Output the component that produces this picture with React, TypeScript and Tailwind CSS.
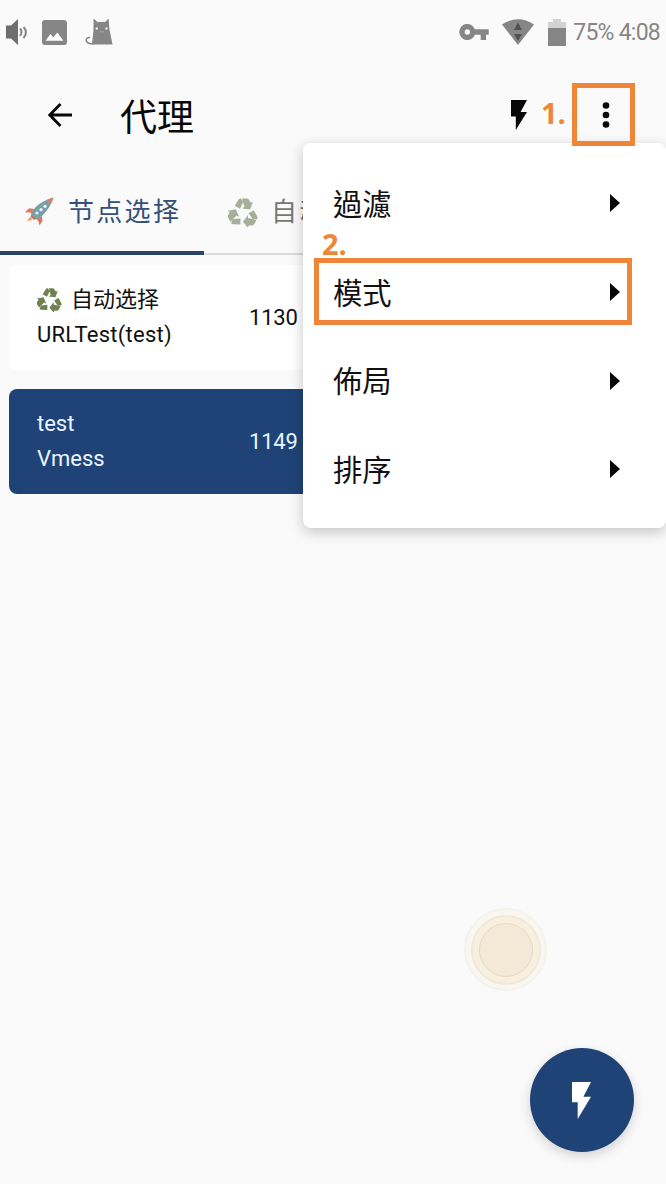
import type { ReactNode } from "react";

function Bolt({ className }: { className: string }) {
  return (
    <svg viewBox="7 2 10 20" preserveAspectRatio="none" className={className} fill="currentColor">
      <path d="M7 2v11h3v9l7-12h-4l4-8z" />
    </svg>
  );
}

const recycleArm = "M6.800 8.800 10.300 2.900Q11.400 1.300 13 1.500L15.200 5 12 11.800zM14.200 1.500h4.300q1.800 0 2.600 1.400l1.700 2.900 2.200-1.200-2.800 7.800-8.300-1 2.500-1.500z";

function Recycle({ className }: { className: string }) {
  return (
    <svg viewBox="0 0 30 30" className={className} fill="currentColor">
      <path d={recycleArm} />
      <path d={recycleArm} transform="rotate(120 15 16.500)" />
      <path d={recycleArm} transform="rotate(240 15 16.500)" />
    </svg>
  );
}

function Rocket() {
  return (
    <svg viewBox="0 0 30 30" className="h-[30px] w-[30px] shrink-0">
      <path d="M10 12 5 11.300 .8 15.500l5.200-.2L9 18z" fill="#e0785a" />
      <path d="M18 19.500 18.500 24 15.500 28.500 14.300 24 11 20.500z" fill="#e0785a" />
      <path d="M6 19.500 3 24.500 8.500 22.500z" fill="#ef9a6e" />
      <path d="M29.500.5C22 2.500 15 6 10.500 11.500 8 14.500 6.800 17.500 7 19.500L10 22.500c3 0 6-1.500 9-4.500C24 13 27.500 7 29.500.5z" fill="#7b9fa8" />
      <path d="M29.500.5c-2.500.7-4.700 1.500-6.800 2.700L27 6.500c.9-2 1.800-4 2.500-6z" fill="#dd8064" />
      <path d="M7 17.500 12 22l-2 .8-3.300-3.100z" fill="#cf6f58" />
      <circle cx="13" cy="16" r="1.600" fill="#e9f6f8" />
      <circle cx="17" cy="12.700" r="1.600" fill="#e9f6f8" />
      <circle cx="21" cy="9.300" r="1.600" fill="#e9f6f8" />
    </svg>
  );
}

function StatusBar() {
  return (
    <div className="flex h-16 items-center justify-between pl-[6px] pr-[6px] text-[#868686]">
      <div className="flex items-center">
        <svg viewBox="0 0 24 28" className="h-7 w-6" fill="none">
          <path d="M0 7.500h5L12 1v26l-7-6.500H0z" fill="#6e6e6e" />
          <path d="M14 10.500q3 3.500 0 7.500M17.500 9q5 5 0 11" stroke="#858585" strokeWidth="2" />
        </svg>
        <svg viewBox="0 0 24 24" className="ml-3 h-[25px] w-[25px]">
          <rect width="24" height="24" rx="3" fill="#868686" />
          <path d="M3.500 20 8 13.500l2.800 3 4-4.500 5.700 8z" fill="#fff" />
        </svg>
        <svg viewBox="0 0 30 28" className="ml-[18px] h-7 w-[30px]">
          <path d="M8.500.5 12.500 4h7.500l3.500-3.500 1 11 3 15H7L8.500 12z" fill="#868686" />
          <path d="M9 25.500C4 26.500 1 24.500 1.200 22c.1-2 2-3 3.800-2.200" stroke="#868686" strokeWidth="1.600" fill="none" />
          <circle cx="11.800" cy="10.500" r="1.200" fill="#eee" />
          <circle cx="21.500" cy="10.500" r="1.200" fill="#eee" />
          <path d="m15 13.500 1 .7.800-.9.900.9 1-.8" stroke="#bbb" strokeWidth=".7" fill="none" />
        </svg>
      </div>
      <div className="flex items-center">
        <svg viewBox="1 6 22 12" className="h-4 w-[30px]" fill="currentColor">
          <path d="M12.650 10A6 6 0 1 0 12.650 14H17v4h4v-4h2v-4zM7 14a2 2 0 1 1 0-4 2 2 0 0 1 0 4z" />
        </svg>
        <svg viewBox="0 0 32 26" className="ml-[13px] h-[26px] w-8">
          <path d="M0 5.500Q16-5 32 5.500L16 26z" fill="#868686" />
          <path d="m16 3.500 4 7.500h-8zM12 15h8l-4 7z" fill="#505050" />
        </svg>
        <svg viewBox="0 0 18 27" className="ml-[14px] h-[27px] w-[18px]">
          <path d="M5 0h8v3h5v6H0V3h5z" fill="#d3d3d3" />
          <path d="M0 9h18v18H0z" fill="#868686" />
        </svg>
        <span className="ml-[7px] whitespace-pre pt-0.5 text-[23px] leading-7 tracking-[-0.750px]">75% 4:08</span>
      </div>
    </div>
  );
}

function ProxyCard({ title, type, delay, selected }: { title: ReactNode; type: ReactNode; delay: string; selected?: boolean }) {
  return (
    <div
      className={
        selected
          ? "flex h-[105px] w-[316px] items-center rounded-lg bg-[#1f4377] pl-7 text-[#e9f5ff]"
          : "flex h-[105px] w-[316px] items-center rounded-lg bg-white pl-7 text-[#111]"
      }
    >
      <div className="flex w-[212px] flex-col pb-0.5 text-[22px] leading-[35px]">
        <div className="flex h-[35px] items-center">{title}</div>
        <div>{type}</div>
      </div>
      <div className="text-[22px] leading-7 tracking-[-0.200px]">{delay}</div>
    </div>
  );
}

const menuItems = ["過濾", "模式", "佈局", "排序"];

function Menu() {
  return (
    <div className="absolute left-[303px] top-[143px] h-[385px] w-[363px] rounded-lg bg-white pt-4 font-['Roboto','Noto_Sans_CJK_TC',sans-serif] shadow-[0_4px_14px_rgba(0,0,0,0.22)]">
      {menuItems.map((label) => (
        <div key={label} className="flex h-[88.700px] items-center justify-between pl-[30px] pr-[46px] text-[29.300px] leading-10 text-[#111]">
          <span className="pt-[3px]">{label}</span>
          <svg viewBox="0 0 10 18" className="h-[18px] w-[10px]">
            <path d="M0 0 10 9 0 18z" fill="#080808" />
          </svg>
        </div>
      ))}
    </div>
  );
}

export default function App() {
  return (
    <div className="relative h-[1184px] w-[666px] overflow-hidden bg-[#fafafa] font-['Roboto','Noto_Sans_CJK_SC',sans-serif]">
      <StatusBar />
      <header className="flex h-[102px] items-center pl-[48px] pr-[56px] text-[#080808]">
        <svg viewBox="0 0 24 24" className="h-6 w-6" fill="none" stroke="currentColor" strokeWidth="2.800">
          <path d="M24 12H2M12.500 1 1.700 12l10.800 11" />
        </svg>
        <h1 className="ml-12 grow pt-[7px] text-[37px] leading-[48px]">代理</h1>
        <Bolt className="h-[30px] w-4" />
        <svg viewBox="0 0 8 26" className="ml-[75px] h-[26px] w-2" fill="currentColor">
          <circle cx="4" cy="3.500" r="3.300" />
          <circle cx="4" cy="13" r="3.300" />
          <circle cx="4" cy="22.500" r="3.300" />
        </svg>
      </header>
      <nav className="flex h-[89px] border-b-2 border-[#dcdcdc] text-[26px] leading-9 tracking-[2.300px]">
        <div className="relative flex h-[89px] w-[204px] items-center border-b-4 border-[#2a4366] pl-6 pt-[7px] text-[#344f78]">
          <Rocket />
          <span className="ml-[14px] whitespace-nowrap">节点选择</span>
        </div>
        <div className="flex h-[89px] w-[99px] items-center overflow-hidden pl-6 pt-[3px] text-[#777]">
          <Recycle className="h-[30px] w-[30px] shrink-0 text-[#a8af98]" />
          <span className="ml-[13px] whitespace-nowrap">自动选择</span>
        </div>
      </nav>
      <main className="flex flex-col gap-[19px] pl-[9px] pt-[10px]">
        <ProxyCard
          title={
            <>
              <Recycle className="mr-[9px] h-[25px] w-[25px] text-[#71804f]" />
              自动选择
            </>
          }
          type={<span className="tracking-[0.250px]">URLTest(test)</span>}
          delay="1130"
        />
        <ProxyCard title="test" type="Vmess" delay="1149" selected />
      </main>

      <Menu />

      <div className="absolute left-[572px] top-[83px] h-[63px] w-[63px] border-[5px] border-[#f08437]" />
      <div className="absolute left-[314px] top-[258px] h-[67px] w-[318px] border-[5px] border-[#f08437]" />
      <span className="absolute left-[541px] top-[96px] font-['Open_Sans',sans-serif] text-[29px] font-bold leading-[34px] text-[#f08437]">1.</span>
      <span className="absolute left-[322px] top-[227px] font-['Open_Sans',sans-serif] text-[29px] font-bold leading-[34px] text-[#f08437]">2.</span>

      <div className="absolute left-[464px] top-[908px] flex h-[83px] w-[83px] items-center justify-center rounded-full border-2 border-[#f3f2ef] bg-[#faf7f0]">
        <div className="flex h-[70px] w-[70px] items-center justify-center rounded-full border-2 border-[#f0e8da] bg-[#f8efdf]">
          <div className="h-[54px] w-[54px] rounded-full border border-[#e7dac6] bg-[#f4e8d6]" />
        </div>
      </div>
      <button className="absolute left-[530px] top-[1048px] flex h-[104px] w-[104px] items-center justify-center rounded-full bg-[#1f4377] text-white shadow-[0_4px_12px_rgba(0,0,0,0.16)]">
        <Bolt className="mr-0.5 h-[37px] w-[19px]" />
      </button>
    </div>
  );
}
